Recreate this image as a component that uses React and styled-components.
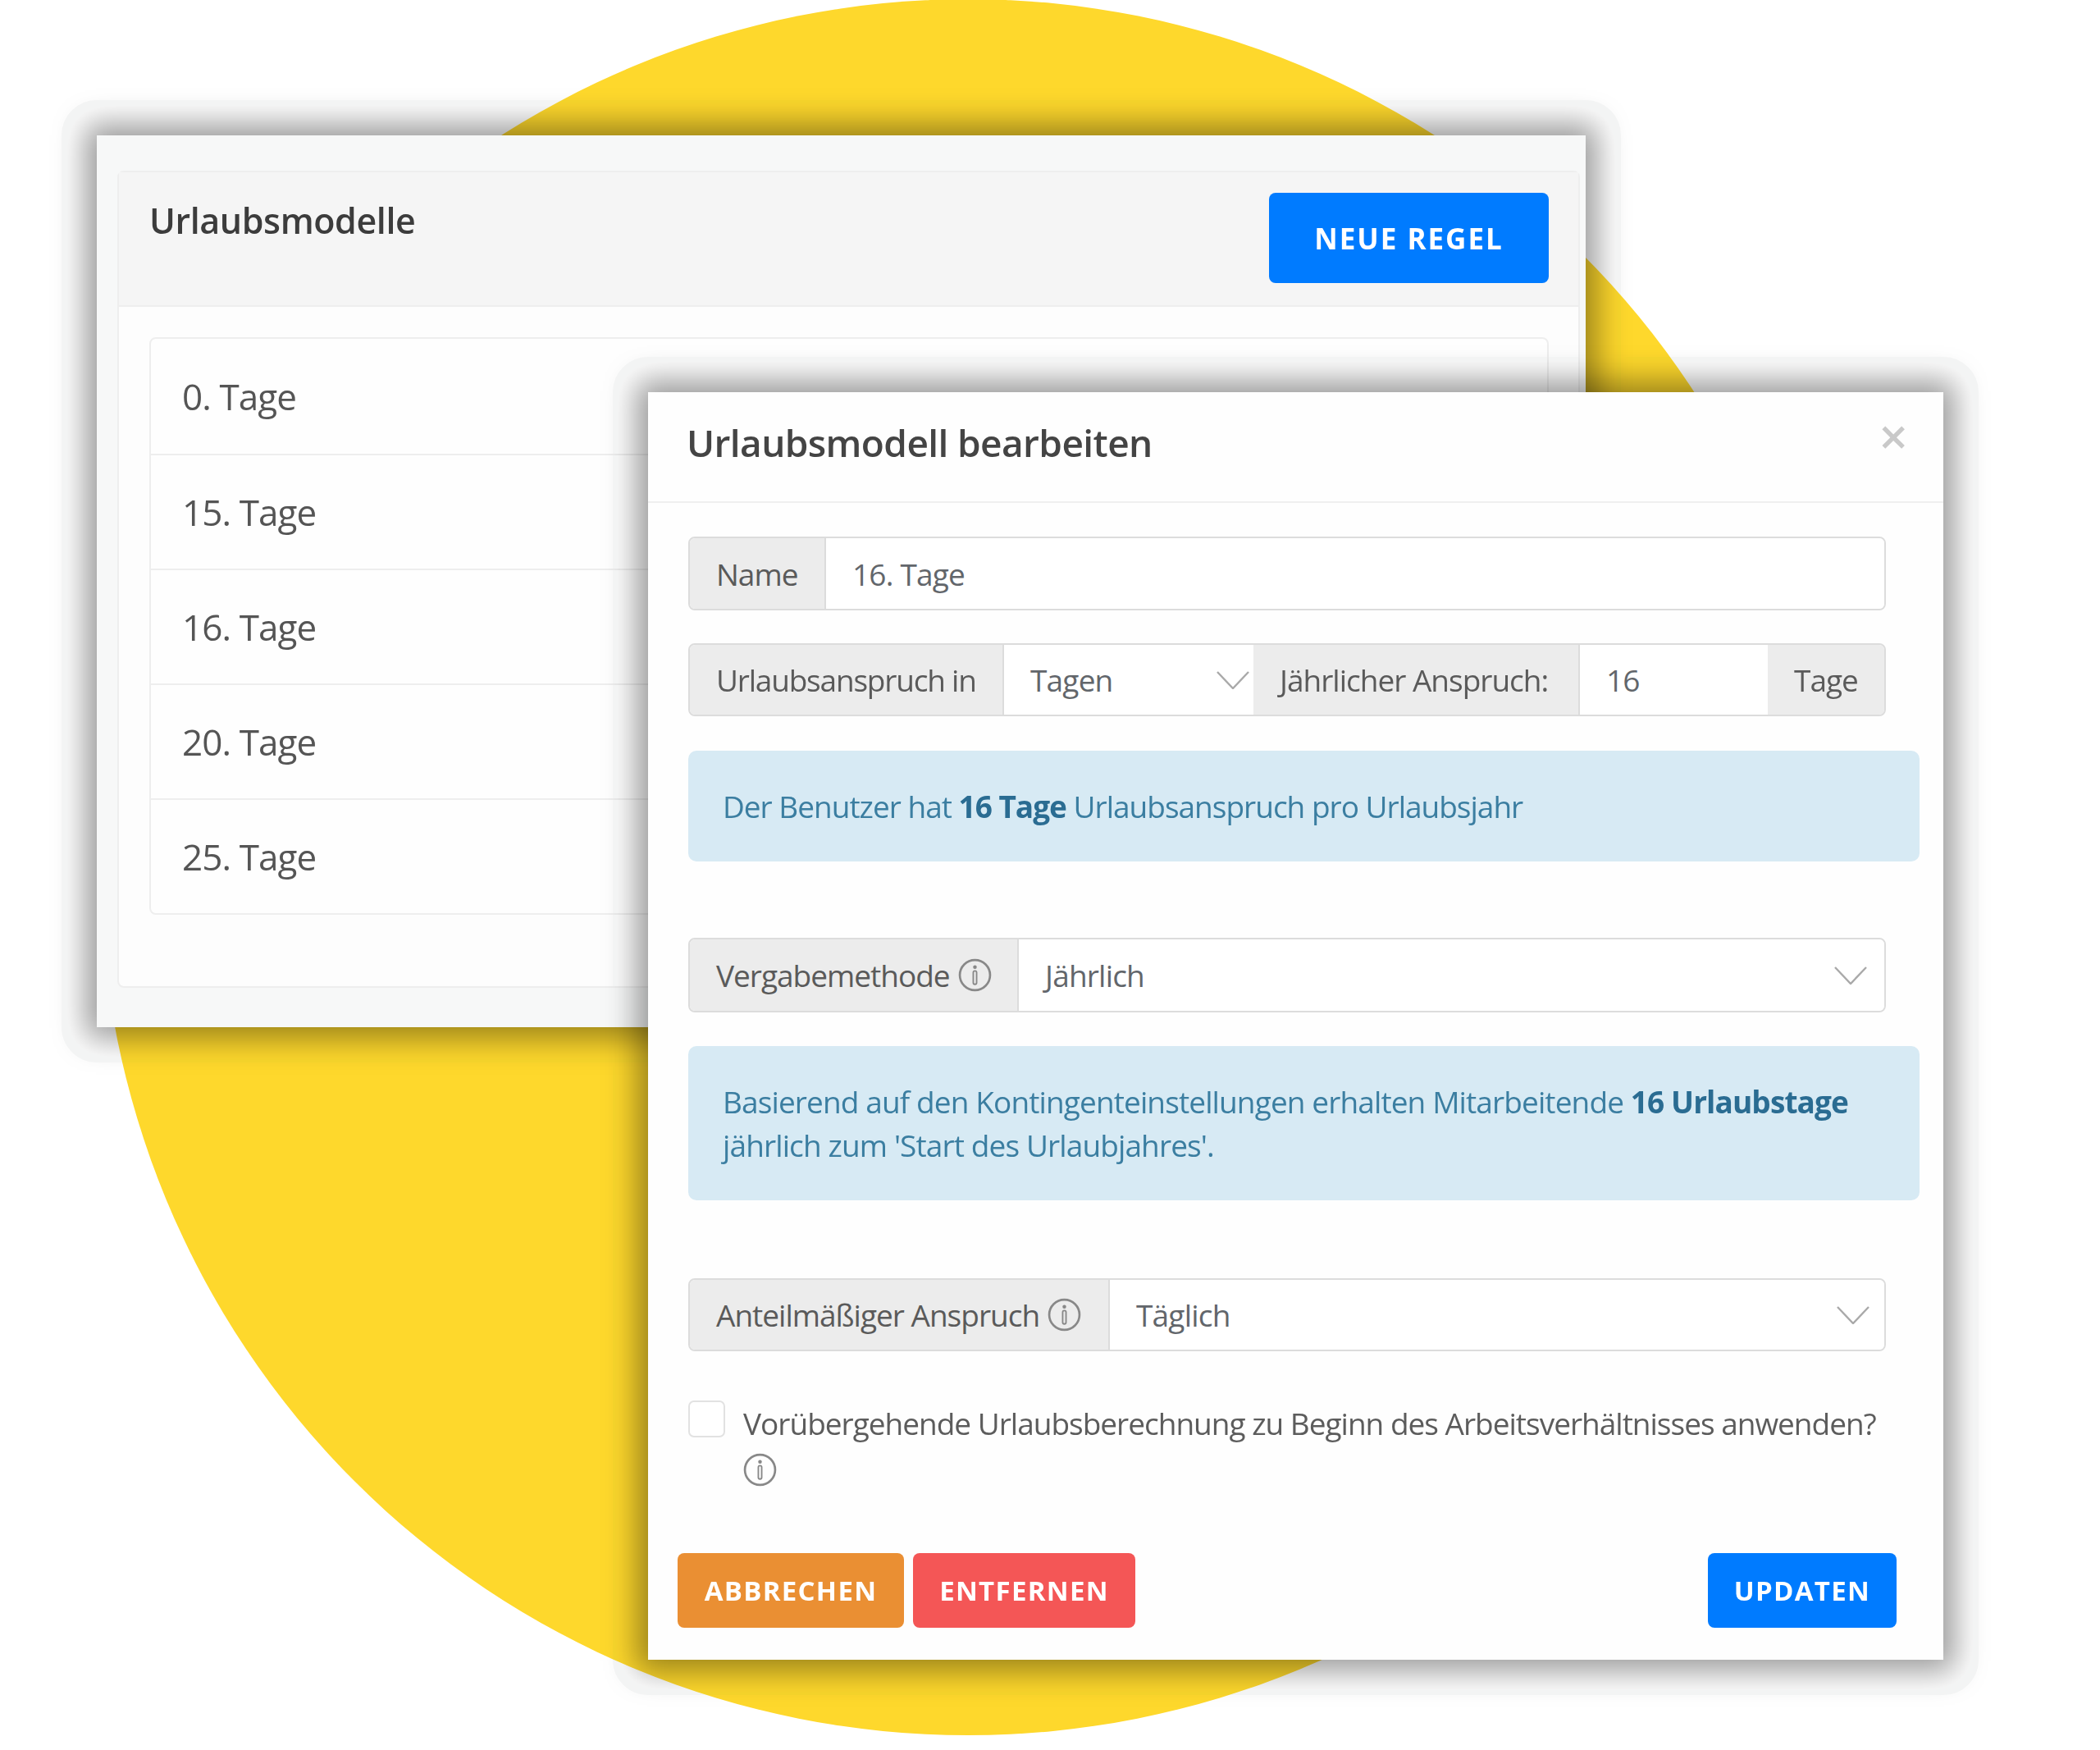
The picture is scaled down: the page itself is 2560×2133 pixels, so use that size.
import React from 'react'
import styled, { createGlobalStyle, css } from 'styled-components'

const Global = createGlobalStyle`
  html, body { margin: 0; padding: 0; background: #fff; }
  * { box-sizing: border-box; }
  body { font-family: "Open Sans", "Noto Sans", sans-serif; color: #555; }
`

const Stage = styled.div`
  position: relative;
  width: 2560px;
  height: 2133px;
  overflow: hidden;
`

const Circle = styled.div`
  position: absolute;
  left: 122px;
  top: -1px;
  width: 2116px;
  height: 2116px;
  border-radius: 50%;
  background: #fed82c;
`

const windowFrame = css`
  position: absolute;
  box-shadow: 0 0 36px 14px rgba(0, 0, 0, 0.4);
  &::before {
    content: '';
    position: absolute;
    inset: -43px;
    border: 43px solid #f3f4f4;
    border-radius: 43px;
    mix-blend-mode: darken;
    pointer-events: none;
  }
`

const CardWindow = styled.div`
  ${windowFrame}
  left: 118px;
  top: 165px;
  width: 1815px;
  height: 1087px;
  background: #f7f8f8;
  padding: 43px 7px 48px 25px;
`

const Panel = styled.div`
  height: 100%;
  border: 2px solid #eeeeee;
  border-radius: 8px;
  background: #fdfdfd;
`

const PanelHead = styled.div`
  display: flex;
  justify-content: space-between;
  height: 164px;
  padding: 25px 36px 0 37px;
  background: #f5f5f5;
  border-bottom: 2px solid #eeeeee;
`

const PanelTitle = styled.h2`
  margin: 6px 0 0;
  font-size: 43px;
  line-height: 56px;
  font-weight: 600;
  letter-spacing: -0.4px;
  color: #3c3c3c;
`

const Button = styled.button`
  border: 0;
  border-radius: 8px;
  padding: 0;
  font-family: inherit;
  font-weight: 700;
  font-size: ${(p) => p.$fs || 33}px;
  letter-spacing: ${(p) => p.$ls || 1.3}px;
  color: #fff;
  background: ${(p) => p.$bg};
  width: ${(p) => p.$w}px;
  height: ${(p) => p.$h}px;
`

const PanelBody = styled.div`
  padding: 37px 36px 0 37px;
`

const List = styled.div`
  border: 2px solid #eeeeee;
  border-radius: 8px;
  background: #fefefe;
`

const ListRow = styled.div`
  height: 140px;
  padding: 0 38px;
  display: flex;
  align-items: center;
  font-size: 44px;
  letter-spacing: -0.9px;
  color: #555;
  & + & { border-top: 2px solid #eeeeee; }
`

const ModalWindow = styled.div`
  ${windowFrame}
  left: 790px;
  top: 478px;
  width: 1579px;
  height: 1545px;
  background: #fefefe;
`

const ModalHead = styled.div`
  position: relative;
  height: 135px;
  padding: 31px 47px 0;
  border-bottom: 2px solid #efefef;
`

const ModalTitle = styled.h2`
  margin: 0;
  font-size: 46px;
  line-height: 60px;
  font-weight: 600;
  letter-spacing: -0.6px;
  color: #444;
`

const Close = styled.span`
  position: absolute;
  right: 43px;
  top: 26px;
  font-size: 62px;
  line-height: 54px;
  font-weight: 600;
  color: #c9c9c9;
`

const ModalBody = styled.div`
  padding: 41px 0 0 49px;
`

const Group = styled.div`
  display: flex;
  width: 1460px;
  height: ${(p) => p.$h || 90}px;
  margin-top: ${(p) => p.$top || 0}px;
  border: 2px solid #dcdcdc;
  border-radius: 8px;
  overflow: hidden;
  font-size: 37px;
  letter-spacing: -1px;
`

const Addon = styled.div`
  display: flex;
  align-items: center;
  gap: 10px;
  flex: 0 0 ${(p) => p.$w}px;
  padding-left: 32px;
  background: #ececec;
  color: #5a5a5a;
  white-space: nowrap;
  letter-spacing: ${(p) => p.$ls || -1}px;
  & + & { border-left: 2px solid #dcdcdc; }
`

const Field = styled.div`
  position: relative;
  display: flex;
  align-items: center;
  flex: ${(p) => (p.$w ? `0 0 ${p.$w}px` : '1 1 0')};
  padding-left: 32px;
  background: #fff;
  color: #62666b;
  letter-spacing: -0.8px;
  border-left: 2px solid #dcdcdc;
`

const Chevron = styled.svg`
  position: absolute;
  right: ${(p) => p.$right}px;
  top: 50%;
  margin-top: -11px;
  width: 40px;
  height: 22px;
`

const Alert = styled.div`
  width: 1501px;
  margin-top: ${(p) => p.$top}px;
  padding: ${(p) => p.$pad}px 42px;
  border-radius: 10px;
  background: #d7eaf4;
  color: #3b7ea1;
  font-size: 37px;
  line-height: 53px;
  letter-spacing: ${(p) => p.$ls || -1}px;
  strong { font-weight: 700; color: #2a6c92; }
`

const CheckRow = styled.div`
  display: flex;
  margin-top: 60px;
  gap: 22px;
  width: 1470px;
`

const Check = styled.input`
  appearance: none;
  flex: 0 0 45px;
  height: 45px;
  margin: 0;
  border: 2px solid #e2e2e2;
  border-radius: 7px;
  background: #fff;
`

const CheckLabel = styled.div`
  font-size: 37px;
  line-height: 55px;
  letter-spacing: -1px;
  color: #5c5c5c;
  white-space: nowrap;
`

const InfoWrap = styled.svg`
  width: 41px;
  height: 41px;
  flex: none;
  display: ${(p) => (p.$block ? 'block' : 'inline-block')};
  margin-top: ${(p) => (p.$block ? 9 : 0)}px;
`

const Footer = styled.div`
  display: flex;
  gap: 11px;
  margin-top: 81px;
  margin-left: -13px;
  width: 1486px;
  & > :last-child { margin-left: auto; }
`

const Info = ({ block }) => (
  <InfoWrap viewBox="0 0 40 40" $block={block}>
    <circle cx="20" cy="20" r="18" fill="none" stroke="#888" strokeWidth="2.6" />
    <circle cx="20" cy="10.5" r="2.2" fill="#888" />
    <rect x="18" y="15" width="4" height="16" rx="2" fill="none" stroke="#888" strokeWidth="1.8" />
  </InfoWrap>
)

const Down = ({ right }) => (
  <Chevron viewBox="0 0 40 22" $right={right}>
    <path d="M1 1 L20 21 L39 1" fill="none" stroke="#a9a9a9" strokeWidth="2.4" />
  </Chevron>
)

const rows = ['0. Tage', '15. Tage', '16. Tage', '20. Tage', '25. Tage']

export default function App() {
  return (
    <Stage>
      <Global />
      <Circle />
      <CardWindow>
        <Panel>
          <PanelHead>
            <PanelTitle>Urlaubsmodelle</PanelTitle>
            <Button $bg="#007bff" $w={341} $h={110} $fs={35} $ls={2}>NEUE REGEL</Button>
          </PanelHead>
          <PanelBody>
            <List>
              {rows.map((r) => <ListRow key={r}>{r}</ListRow>)}
            </List>
          </PanelBody>
        </Panel>
      </CardWindow>
      <ModalWindow>
        <ModalHead>
          <ModalTitle>Urlaubsmodell bearbeiten</ModalTitle>
          <Close>×</Close>
        </ModalHead>
        <ModalBody>
          <Group>
            <Addon $w={164}>Name</Addon>
            <Field>16. Tage</Field>
          </Group>
          <Group $top={40} $h={89}>
            <Addon $w={381} $ls={-1.2}>Urlaubsanspruch in</Addon>
            <Field $w={306}>Tagen<Down right={5} /></Field>
            <Addon $w={396}>Jährlicher Anspruch:</Addon>
            <Field $w={231}>16</Field>
            <Addon $w={142}>Tage</Addon>
          </Group>
          <Alert $top={42} $pad={41}>
            Der Benutzer hat <strong>16 Tage</strong> Urlaubsanspruch pro Urlaubsjahr
          </Alert>
          <Group $top={93} $h={91}>
            <Addon $w={399}>Vergabemethode <Info /></Addon>
            <Field>Jährlich<Down right={21} /></Field>
          </Group>
          <Alert $top={41} $pad={41} $ls={-0.88}>
            Basierend auf den Kontingenteinstellungen erhalten Mitarbeitende <strong>16 Urlaubstage</strong>
            <br />jährlich zum 'Start des Urlaubjahres'.
          </Alert>
          <Group $top={95} $h={89}>
            <Addon $w={510}>Anteilmäßiger Anspruch <Info /></Addon>
            <Field>Täglich<Down right={18} /></Field>
          </Group>
          <CheckRow>
            <Check type="checkbox" readOnly />
            <CheckLabel>
              Vorübergehende Urlaubsberechnung zu Beginn des Arbeitsverhältnisses anwenden?
              <Info block />
            </CheckLabel>
          </CheckRow>
          <Footer>
            <Button $bg="#ea8f33" $w={276} $h={91}>ABBRECHEN</Button>
            <Button $bg="#f45656" $w={271} $h={91}>ENTFERNEN</Button>
            <Button $bg="#007bff" $w={230} $h={91}>UPDATEN</Button>
          </Footer>
        </ModalBody>
      </ModalWindow>
    </Stage>
  )
}
